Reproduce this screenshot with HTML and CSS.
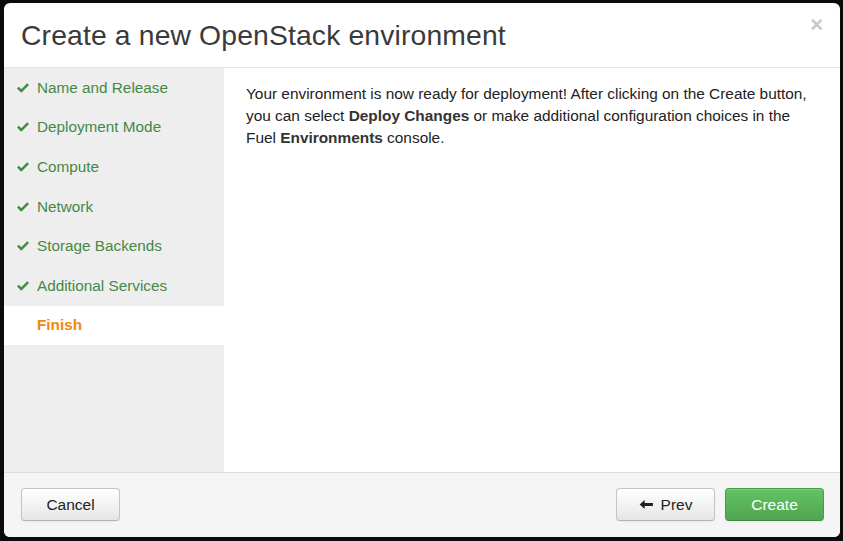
FILE: index.html
```html
<!DOCTYPE html>
<html>
<head>
<meta charset="utf-8">
<link rel="stylesheet" href="styles.css">
</head>
<body>
<div class="modal">
  <div class="modal-header">
    <h3 class="title">Create a new OpenStack environment</h3>
    <span class="close">&times;</span>
  </div>
  <div class="modal-body">
    <ul class="steps">
      <li class="step done"><svg class="check" viewBox="0 0 14 12"><path d="M1 6.5 L2.8 4.7 L5.3 7.2 L11.2 1.3 L13 3.1 L5.3 10.8 Z" fill="#3f8e3f"/></svg>Name and Release</li>
      <li class="step done"><svg class="check" viewBox="0 0 14 12"><path d="M1 6.5 L2.8 4.7 L5.3 7.2 L11.2 1.3 L13 3.1 L5.3 10.8 Z" fill="#3f8e3f"/></svg>Deployment Mode</li>
      <li class="step done"><svg class="check" viewBox="0 0 14 12"><path d="M1 6.5 L2.8 4.7 L5.3 7.2 L11.2 1.3 L13 3.1 L5.3 10.8 Z" fill="#3f8e3f"/></svg>Compute</li>
      <li class="step done"><svg class="check" viewBox="0 0 14 12"><path d="M1 6.5 L2.8 4.7 L5.3 7.2 L11.2 1.3 L13 3.1 L5.3 10.8 Z" fill="#3f8e3f"/></svg>Network</li>
      <li class="step done"><svg class="check" viewBox="0 0 14 12"><path d="M1 6.5 L2.8 4.7 L5.3 7.2 L11.2 1.3 L13 3.1 L5.3 10.8 Z" fill="#3f8e3f"/></svg>Storage Backends</li>
      <li class="step done"><svg class="check" viewBox="0 0 14 12"><path d="M1 6.5 L2.8 4.7 L5.3 7.2 L11.2 1.3 L13 3.1 L5.3 10.8 Z" fill="#3f8e3f"/></svg>Additional Services</li>
      <li class="step active">Finish</li>
    </ul>
    <div class="pane">
      <p>Your environment is now ready for deployment! After clicking on the Create button, you can select <b>Deploy Changes</b> or make additional configuration choices in the Fuel <b>Environments</b> console.</p>
    </div>
  </div>
  <div class="modal-footer">
    <button class="btn">Cancel</button>
    <div class="spacer"></div>
    <button class="btn"><svg class="arrow" viewBox="0 0 16 12"><path d="M0.5 6 L6 1 L6 4.3 L15 4.3 L15 7.7 L6 7.7 L6 11 Z" fill="#222"/></svg>Prev</button>
    <button class="btn btn-success">Create</button>
  </div>
</div>
</body>
</html>
```

FILE: styles.css
```css
html, body {
  margin: 0;
  padding: 0;
  background: #0b0b0b;
}
body {
  font-family: "Liberation Sans", Arial, sans-serif;
  width: 843px;
  height: 541px;
  overflow: hidden;
}
.modal {
  margin: 3px 0 0 4px;
  width: 836px;
  height: 534px;
  background: #fff;
  border-radius: 6px;
  overflow: hidden;
  display: flex;
  flex-direction: column;
}
.modal-header {
  height: 64px;
  border-bottom: 1px solid #e5e5e5;
  display: flex;
  align-items: center;
  padding: 0 17px;
  position: relative;
}
.title {
  margin: 0;
  font-weight: 300;
  font-size: 28.3px;
  color: #3a3a3a;
  letter-spacing: 0.15px;
}
.close {
  position: absolute;
  right: 17px;
  top: 10px;
  font-size: 22px;
  font-weight: bold;
  color: #c8c8c8;
  line-height: 24px;
}
.modal-body {
  flex: 1;
  display: flex;
}
.steps {
  list-style: none;
  margin: 0;
  padding: 0;
  width: 220px;
  background: #eeeeee;
}
.step {
  height: 39.6px;
  display: flex;
  align-items: center;
  padding-left: 12px;
  font-size: 15.3px;
  color: #468847;
}
.check {
  width: 14px;
  height: 12px;
  margin-right: 7px;
}
.step.active {
  background: #fff;
  color: #f0880c;
  font-weight: bold;
  padding-left: 33px;
}
.pane {
  flex: 1;
  padding: 15px 22px 0 22px;
}
.pane p {
  margin: 0;
  font-size: 15.4px;
  line-height: 22px;
  color: #222;
}
.pane b {
  color: #333;
}
.modal-footer {
  height: 65px;
  border-top: 1px solid #dddddd;
  background: #f5f5f5;
  display: flex;
  align-items: flex-start;
  padding: 15px 16px 0 17px;
  gap: 10px;
  box-sizing: border-box;
}
.spacer {
  flex: 1;
}
.btn {
  width: 99px;
  height: 33px;
  border: 1px solid #c5c5c5;
  border-bottom-color: #b3b3b3;
  border-radius: 4px;
  background: linear-gradient(#ffffff, #e6e6e6);
  box-shadow: inset 0 1px 0 rgba(255,255,255,0.2), 0 1px 2px rgba(0,0,0,0.05);
  font-family: "Liberation Sans", Arial, sans-serif;
  font-size: 15.5px;
  color: #222;
  display: flex;
  align-items: center;
  justify-content: center;
  padding: 0;
}
.arrow {
  width: 15px;
  height: 11px;
  margin-right: 7px;
}
.btn-success {
  background: linear-gradient(#62c462, #51a351);
  border-color: #4b9a4b;
  border-bottom-color: #3f8a3f;
  color: #fff;
}
```
